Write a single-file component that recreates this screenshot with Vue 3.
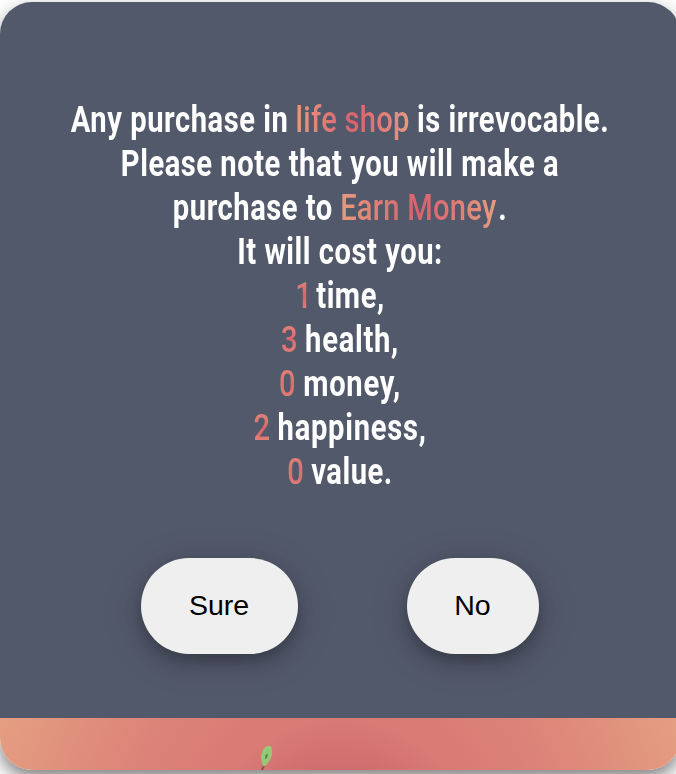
<script setup>
const lines = [
  { id: 'l1', parts: [{ t: 'Any purchase in' }, { t: 'life shop', hot: true }, { t: 'is irrevocable.' }] },
  { id: 'l2', parts: [{ t: 'Please note that you will make a' }] },
  { id: 'l3', parts: [{ t: 'purchase to' }, { t: 'Earn Money', hot: true }, { t: '.' }] },
  { id: 'l4', parts: [{ t: 'It will cost you:' }] },
  { id: 'l5', parts: [{ t: '1', hot: true }, { t: 'time,' }] },
  { id: 'l6', parts: [{ t: '3', hot: true }, { t: 'health,' }] },
  { id: 'l7', parts: [{ t: '0', hot: true }, { t: 'money,' }] },
  { id: 'l8', parts: [{ t: '2', hot: true }, { t: 'happiness,' }] },
  { id: 'l9', parts: [{ t: '0', hot: true }, { t: 'value.' }] },
]
</script>

<template>
  <main class="page">
    <section class="card">
      <div class="dialog">
        <div class="message">
          <p v-for="line in lines" :key="line.id" class="line" :class="line.id">
            <span v-for="(part, i) in line.parts" :key="i" :class="{ hot: part.hot }">{{ part.t }}</span>
          </p>
        </div>
        <div class="actions">
          <button type="button" class="sure">Sure</button>
          <button type="button" class="no">No</button>
        </div>
      </div>
      <footer class="ground">
        <svg class="leaf" width="16" height="28" viewBox="0 0 16 28">
          <path d="M5 21 L2 27" stroke="#6d5860" stroke-width="1.8" fill="none" />
          <path d="M4.8 21.5C.8 17 1.2 6 6.5 2C9 .2 11.5.5 12.5 2.5C14.5 9 12 17 4.8 21.5Z" fill="#95c975" />
          <path d="M6 14.5 L6.6 9.8 L8.8 8.8 L8.4 12.5Z" fill="#5f8055" />
        </svg>
      </footer>
    </section>
  </main>
</template>

<style>
body {
  overflow: hidden;
  background: #fff;
}
</style>

<style scoped>
.page {
  height: 774px;
  padding-top: 2px;
  box-sizing: border-box;
  overflow: hidden;
}
.card {
  width: 680px;
  height: 768px;
  border-radius: 32px;
  overflow: hidden;
  box-shadow: 0 8px 18px rgba(0, 0, 0, 0.5);
}
.dialog {
  height: 716px;
  padding-top: 96px;
  box-sizing: border-box;
  background: #52596b;
}
.message {
  height: 396px;
  display: flex;
  flex-direction: column;
  align-items: center;
  transform: scaleX(0.81);
  font-family: Roboto, sans-serif;
  font-size: 36px;
  font-weight: 700;
  line-height: 45px;
  letter-spacing: 0.65px;
  color: #fff;
}
.line {
  display: flex;
  gap: 9px;
  height: 44px;
  margin: 0;
  white-space: nowrap;
}
.l3 {
  gap: 0;
}
.l3 .hot {
  margin: 0 2px 0 9px;
}
.l5 {
  gap: 5px;
}
.l6,
.l7,
.l8 {
  letter-spacing: 0.9px;
}
.hot {
  font-weight: 500;
  letter-spacing: 0.3px;
  color: transparent;
  background: radial-gradient(circle, #d95f6c, #e79d80);
  -webkit-background-clip: text;
  background-clip: text;
}
.actions {
  display: flex;
  justify-content: center;
  gap: 109px;
  padding-top: 64px;
}
button {
  height: 96px;
  padding: 0 1px 2px 0;
  border: 0;
  border-radius: 48px;
  background: #efefef;
  color: #000;
  font: 28.5px "Liberation Sans", Arial, sans-serif;
  box-shadow: 0 8px 16px rgba(0, 0, 0, 0.26), 0 6px 40px rgba(0, 0, 0, 0.13);
}
.sure {
  width: 157px;
}
.no {
  width: 132px;
}
.ground {
  height: 52px;
  padding: 27px 0 0 259px;
  box-sizing: border-box;
  overflow: hidden;
  background: radial-gradient(circle 370px at 50% 130px, #cf6b6e 20%, #d97a75 35%, #dc8278 58%, #e49e81 98%);
}
.leaf {
  display: block;
}
</style>
